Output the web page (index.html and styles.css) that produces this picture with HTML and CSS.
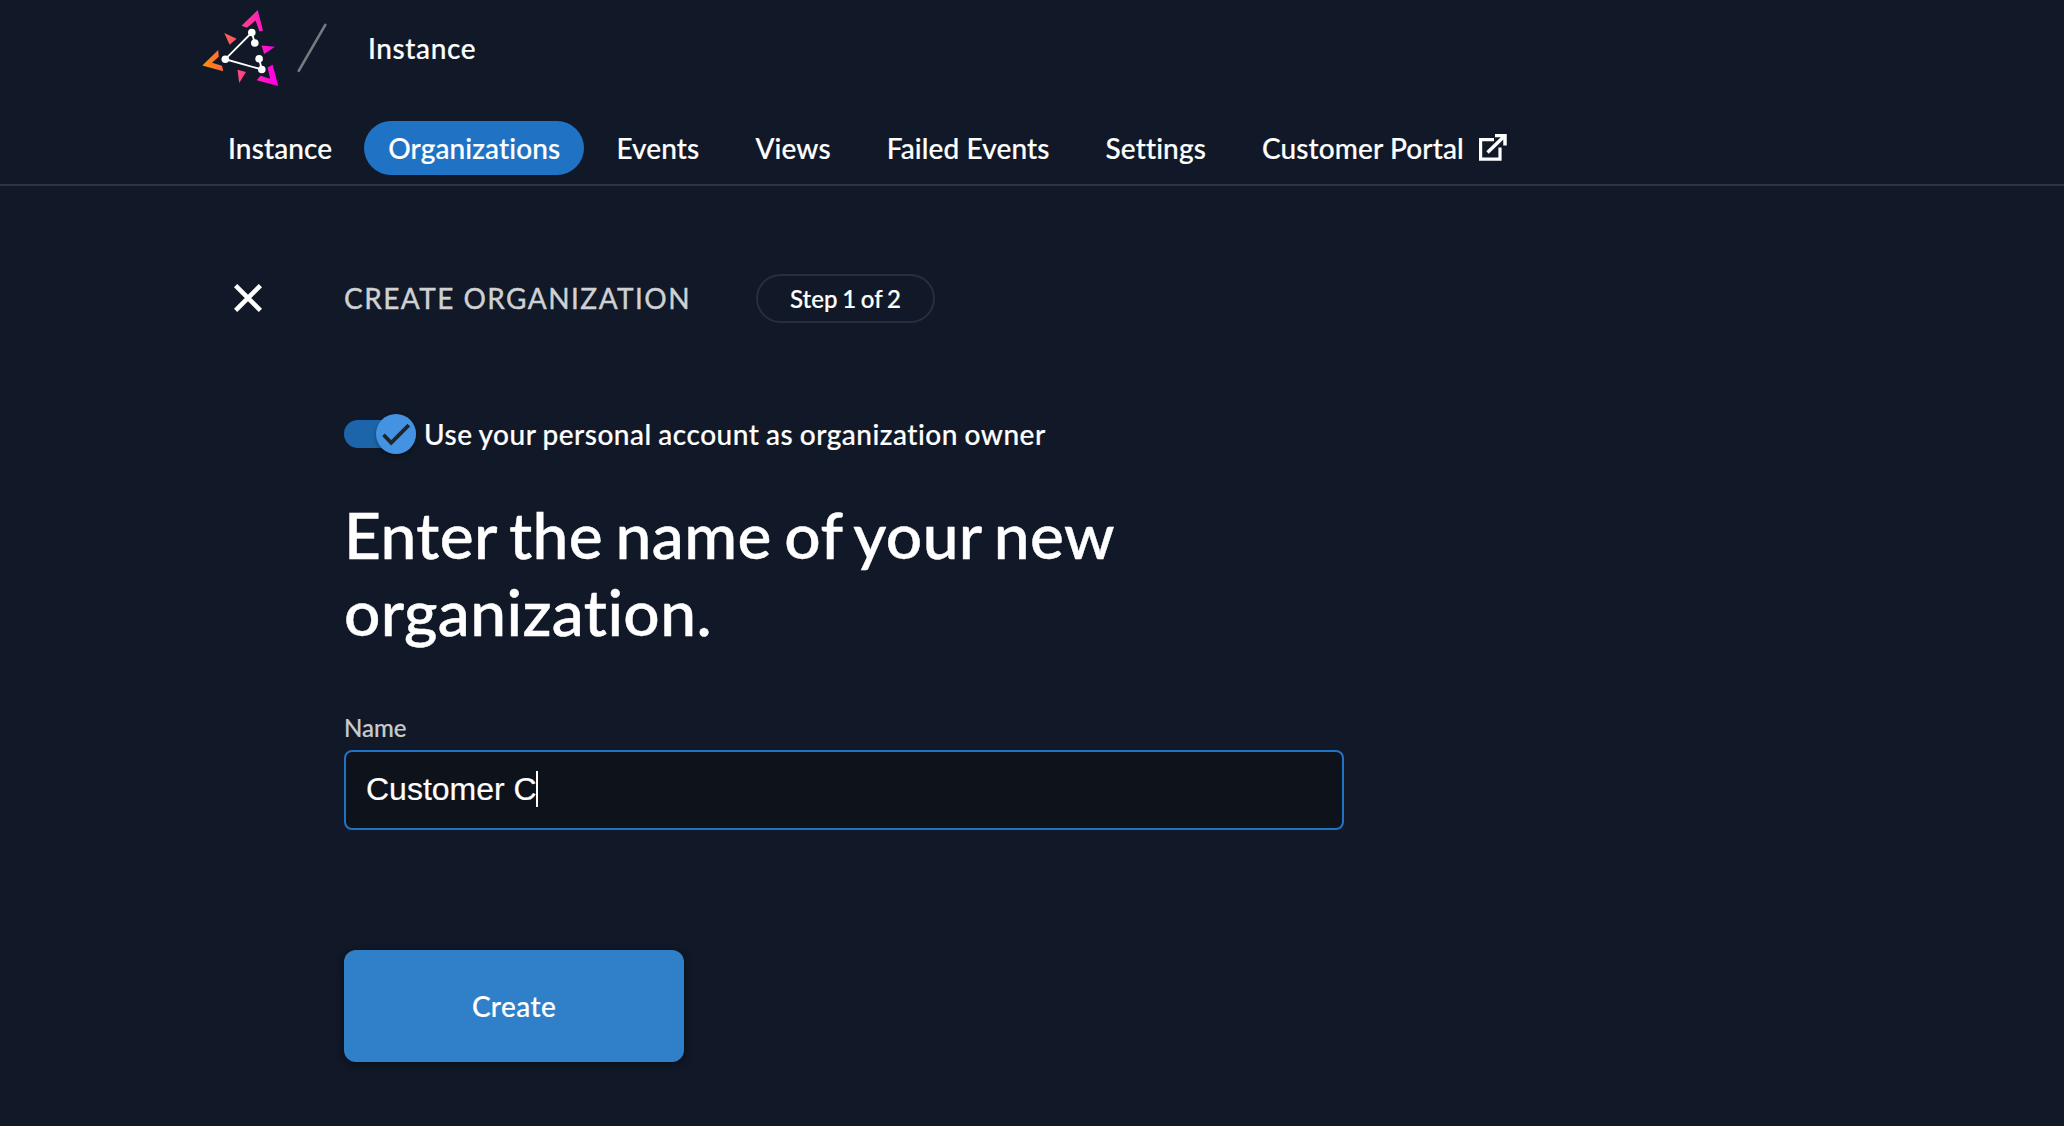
FILE: index.html
```html
<!DOCTYPE html>
<html lang="en">
<head>
<meta charset="utf-8">
<title>Create Organization</title>
<link rel="stylesheet" href="styles.css">
</head>
<body>
<header class="header">
  <div class="topbar">
    <svg class="logo" viewBox="0 0 150 100" width="150" height="100" aria-hidden="true">
      <defs>
        <linearGradient id="brand" gradientUnits="userSpaceOnUse" x1="13" y1="62" x2="84" y2="62">
          <stop offset="0" stop-color="#ff8f00"/>
          <stop offset=".5" stop-color="#fe4a7c"/>
          <stop offset="1" stop-color="#ff00e6"/>
        </linearGradient>
      </defs>
      <g fill="url(#brand)">
        <path d="M67.7 10 51.5 25.8 57 27.7 65.6 20.6 69.4 31.6 73 30.6Z"/>
        <path d="M12.3 65.4 28.2 50 28.8 56.8 22 62.7 32 65.8 33.2 71.2Z"/>
        <path d="M88.2 86 66.7 80.2 70.5 75.8 80.2 78.8 77.6 67.5 82.7 64.8Z"/>
        <path d="M34.3 33 46.6 38.8 39.6 44.8Z"/>
        <path d="M71.5 45.6 85 46.7 74.2 54Z"/>
        <path d="M47.5 69.8 56 72 49.2 83Z"/>
      </g>
      <path d="M64.8 43 61.8 32.5 35.3 59.2 71.8 69.5 69.1 58.7" fill="none" stroke="#fff" stroke-width="1.9"/>
      <g fill="#fff"><circle cx="61.8" cy="32.5" r="3.8"/><circle cx="64.8" cy="43" r="3.8"/><circle cx="35.3" cy="59.2" r="3.8"/><circle cx="69.1" cy="58.7" r="3.8"/><circle cx="71.8" cy="69.5" r="3.8"/></g>
      <path d="M135.3 24.8 108.7 70.8" stroke="#777a80" stroke-width="2.6" stroke-linecap="round"/>
    </svg>
    <span class="context">Instance</span>
  </div>
  <nav class="nav">
    <a class="tab">Instance</a>
    <a class="tab tab-active">Organizations</a>
    <a class="tab">Events</a>
    <a class="tab">Views</a>
    <a class="tab">Failed Events</a>
    <a class="tab">Settings</a>
    <a class="tab">Customer Portal
      <svg class="external" viewBox="0 0 28 28" width="28" height="28" fill="none" stroke="#fff" stroke-width="3.2"><path d="M15 5.600H1.600V25.200H21V13.500"/><path d="M16 1.600H26V11.500M25 2.600 8.500 18.500" stroke-width="3.500"/></svg>
    </a>
  </nav>
</header>
<main class="page">
  <div class="steps">
    <svg class="close" viewBox="0 0 28 28" width="28" height="28" stroke="#fff" stroke-width="4.600"><path d="M1.600 1.600 26.400 26.400M26.400 1.600 1.600 26.400"/></svg>
    <span class="title">CREATE ORGANIZATION</span>
    <span class="badge">Step 1 of 2</span>
  </div>
  <form class="form">
    <div class="toggle-row">
      <span class="toggle"><span class="thumb"><svg viewBox="0 0 40 40" width="40" height="40" fill="none" stroke="#212529" stroke-width="3.800"><path d="M7.500 20.800 15.200 28.800 32.800 11.200"/></svg></span></span>
      <span class="toggle-label">Use your personal account as organization owner</span>
    </div>
    <h1 class="heading">Enter the name of your new organization.</h1>
    <div class="label">Name</div>
    <div class="input"><span class="value">Customer C</span><span class="caret"></span></div>
    <button class="create" type="button">Create</button>
  </form>
</main>
</body>
</html>
```
FILE: styles.css
```css
* { box-sizing: border-box; }
body { margin: 0; min-height: 1126px; background: #111827; color: #fff; font-family: Lato, sans-serif; font-weight: 500; font-size: 28px; overflow: hidden; font-variant-ligatures: none; -webkit-text-stroke: .2px; }
.header { height: 186px; border-bottom: 2px solid #2e3442; }
.topbar { display: flex; height: 100px; padding-left: 190px; }
.logo { flex: none; }
.context { margin-left: 28px; line-height: 97px; letter-spacing: .6px; }
.nav { display: flex; margin-top: 21px; padding-left: 204px; height: 54px; letter-spacing: .12px; }
.tab { display: flex; align-items: center; padding: 0 24px; height: 54px; line-height: 54px; margin-right: 8px; white-space: nowrap; }
.tab-active { background: #2073c4; border-radius: 27px; }
.external { margin-left: 15px; }
.page { padding-left: 234px; padding-top: 88px; }
.steps { display: flex; align-items: center; height: 49px; }
.close { margin-top: -2px; }
.title { margin-left: 82px; width: 348px; letter-spacing: 1.45px; font-weight: 400; color: #cfd1d4; line-height: 48px; white-space: nowrap; margin-top: -2px; -webkit-text-stroke: .4px; }
.badge { margin-left: 64px; width: 179px; height: 49px; border: 2px solid #272e3c; border-radius: 25px; font-size: 24px; line-height: 45px; text-align: center; word-spacing: -1.3px; }
.form { margin-left: 110px; width: 1000px; }
.toggle-row { display: flex; align-items: center; height: 40px; margin-top: 91px; }
.toggle { display: flex; align-items: center; justify-content: flex-end; width: 72px; height: 28px; border-radius: 14px; background: #1d65aa; }
.thumb { display: block; width: 40px; height: 40px; border-radius: 50%; background: #4393e2; box-shadow: 0 2px 4px rgba(0,0,0,.35); }
.toggle-label { margin-left: 8px; white-space: nowrap; letter-spacing: .5px; word-spacing: -.9px; }
.heading { margin: 42px 0 0; width: 820px; font-size: 64px; line-height: 77px; font-weight: 500; letter-spacing: .4px; word-spacing: -4px; -webkit-text-stroke: .5px; }
.label { margin-top: 64px; font-size: 24px; line-height: 28px; color: #c8cacd; }
.input { display: flex; align-items: center; margin-top: 8px; height: 80px; border: 2px solid #2073c4; border-radius: 8px; background: #0e121b; padding: 0 0 2px 20px; }
.value { font: 32px/36px "Liberation Sans", sans-serif; }
.caret { width: 2px; height: 36px; margin-left: -1px; background: #fff; }
.create { display: block; width: 340px; height: 112px; margin-top: 120px; padding: 0; border: 0; border-radius: 12px; background: #307fc9; color: #fff; font: 500 28px Lato, sans-serif; letter-spacing: .4px; box-shadow: 0 2px 10px rgba(0,0,0,.45); }
```
